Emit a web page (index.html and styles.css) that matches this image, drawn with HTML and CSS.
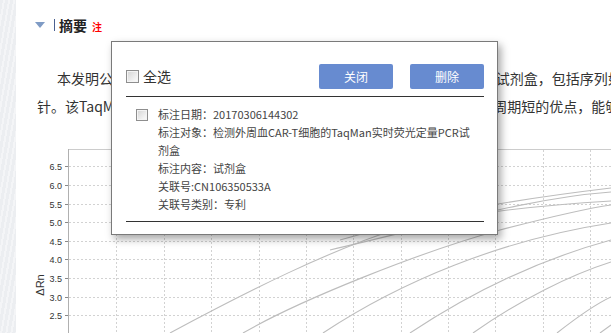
FILE: index.html
```html
<!DOCTYPE html>
<html lang="zh-CN">
<head>
<meta charset="utf-8">
<title>摘要</title>
<link rel="stylesheet" href="styles.css">
</head>
<body>
<div class="page">
  <div class="side-strip"></div>
  <main class="main">
    <div class="section-head">
      <span class="caret"></span>
      <span class="head-bar"></span>
      <h2 class="head-title">摘要</h2>
      <span class="head-note">注</span>
    </div>
    <p class="abstract">本发明公开了一种检测外周血中CAR-T细胞的TaqMan实时荧光定量PCR试剂盒，包括序列如SEQ ID NO.1所示的上游引物<br>针。该TaqMan实时荧光定量PCR试剂盒具有特异性强、灵敏度高、且检测周期短的优点，能够快速准确地检测外周血</p>
    <svg class="chart" width="595" height="193" viewBox="16 140 595 193" xmlns="http://www.w3.org/2000/svg">
      <g stroke="#d2d2d2" stroke-width="1" stroke-dasharray="2 2" fill="none">
        <line x1="69" y1="166.5" x2="611" y2="166.5"/>
        <line x1="69" y1="185.5" x2="611" y2="185.5"/>
        <line x1="69" y1="204.5" x2="611" y2="204.5"/>
        <line x1="69" y1="222.5" x2="611" y2="222.5"/>
        <line x1="69" y1="241.5" x2="611" y2="241.5"/>
        <line x1="69" y1="259.5" x2="611" y2="259.5"/>
        <line x1="69" y1="278.5" x2="611" y2="278.5"/>
        <line x1="69" y1="297.5" x2="611" y2="297.5"/>
        <line x1="69" y1="315.5" x2="611" y2="315.5"/>
        <line x1="116.5" y1="150" x2="116.5" y2="333"/>
        <line x1="164.5" y1="150" x2="164.5" y2="333"/>
        <line x1="211.5" y1="150" x2="211.5" y2="333"/>
        <line x1="259.5" y1="150" x2="259.5" y2="333"/>
        <line x1="306.5" y1="150" x2="306.5" y2="333"/>
        <line x1="353.5" y1="150" x2="353.5" y2="333"/>
        <line x1="401.5" y1="150" x2="401.5" y2="333"/>
        <line x1="448.5" y1="150" x2="448.5" y2="333"/>
        <line x1="495.5" y1="150" x2="495.5" y2="333"/>
        <line x1="543.5" y1="150" x2="543.5" y2="333"/>
        <line x1="590.5" y1="150" x2="590.5" y2="333"/>
      </g>
      <line x1="68" y1="149.5" x2="611" y2="149.5" stroke="#cccccc"/>
      <line x1="68.5" y1="149" x2="68.5" y2="333" stroke="#b0b0b0"/>
      <g stroke="#888" stroke-width="1">
        <line x1="65" y1="166.5" x2="68" y2="166.5"/>
        <line x1="65" y1="185.5" x2="68" y2="185.5"/>
        <line x1="65" y1="204.5" x2="68" y2="204.5"/>
        <line x1="65" y1="222.5" x2="68" y2="222.5"/>
        <line x1="65" y1="241.5" x2="68" y2="241.5"/>
        <line x1="65" y1="259.5" x2="68" y2="259.5"/>
        <line x1="65" y1="278.5" x2="68" y2="278.5"/>
        <line x1="65" y1="297.5" x2="68" y2="297.5"/>
        <line x1="65" y1="315.5" x2="68" y2="315.5"/>
      </g>
      <g class="tick-label" text-anchor="end">
        <text x="62" y="170">6.5</text>
        <text x="62" y="189">6.0</text>
        <text x="62" y="208">5.5</text>
        <text x="62" y="226">5.0</text>
        <text x="62" y="245">4.5</text>
        <text x="62" y="263">4.0</text>
        <text x="62" y="282">3.5</text>
        <text x="62" y="301">3.0</text>
        <text x="62" y="319">2.5</text>
      </g>
      <text class="axis-title" x="0" y="0" text-anchor="middle" transform="translate(44 285) rotate(-90)">ΔRn</text>
      <g stroke="#bdbdbd" stroke-width="1.1" fill="none">
        <path d="M 340 240 C 430 214, 510 200, 611 188"/>
        <path d="M 330 250 C 450 222, 530 198, 611 192"/>
        <path d="M 170 333 C 250 290, 330 250, 400 228 C 470 212, 545 205, 611 201"/>
        <path d="M 243 333 C 300 300, 420 252, 500 230 C 550 217, 590 208, 611 205"/>
        <path d="M 323 333 C 400 282, 500 240, 611 223"/>
        <path d="M 410 333 C 460 300, 530 262, 611 240"/>
        <path d="M 473 333 C 520 300, 570 275, 611 262"/>
        <path d="M 557 333 C 580 315, 598 303, 611 297"/>
        <path d="M 600 333 L 611 325"/>
      </g>
    </svg>
  </main>

  <div class="dialog">
    <div class="dialog-bar">
      <label class="check-all"><span class="cb"></span>全选</label>
      <div class="actions">
        <button class="btn" type="button">关闭</button>
        <button class="btn" type="button">删除</button>
      </div>
    </div>
    <div class="note">
      <span class="cb cb-sm"></span>
      <div class="note-text">
        <p>标注日期：20170306144302</p>
        <p>标注对象：检测外周血CAR-T细胞的TaqMan实时荧光定量PCR试剂盒</p>
        <p>标注内容：试剂盒</p>
        <p>关联号:CN106350533A</p>
        <p>关联号类别：专利</p>
      </div>
    </div>
  </div>
</div>
</body>
</html>
```
FILE: styles.css
```css
* { box-sizing: border-box; }
html, body { margin: 0; padding: 0; }
body {
  background: #fff;
  font-family: "Noto Sans CJK SC", "Noto Sans", sans-serif;
  color: #333;
  overflow: hidden;
  width: 611px;
  height: 333px;
}
.page {
  display: flex;
  width: 611px;
  height: 333px;
  position: relative;
  overflow: hidden;
}
.side-strip {
  flex: 0 0 16px;
  background: repeating-linear-gradient(100deg, #eceef1 0 3px, #f4f5f7 3px 5px);
}
.main {
  flex: 1 1 auto;
  min-width: 0;
}
.section-head {
  height: 50px;
  display: flex;
  align-items: center;
  padding-left: 19px;
}
.caret {
  width: 0;
  height: 0;
  border-left: 5.5px solid transparent;
  border-right: 5.5px solid transparent;
  border-top: 6px solid #7f9bc5;
  margin-right: 9px;
}
.head-bar {
  width: 1px;
  height: 12px;
  background: #4a6090;
  margin-right: 4px;
}
.head-title {
  margin: 0;
  font-size: 14px;
  font-weight: bold;
  color: #222;
  line-height: 20px;
}
.head-note {
  margin-left: 5px;
  margin-top: 3px;
  font-size: 10px;
  font-weight: bold;
  color: #f00;
}
.abstract {
  margin: 14px 0 0;
  padding-left: 21px;
  font-size: 14px;
  line-height: 28px;
  text-indent: 20px;
  white-space: nowrap;
  color: #333;
}
.chart {
  display: block;
  margin-top: 20px;
}
.tick-label text {
  font-family: "Liberation Sans", Arial, sans-serif;
  font-size: 9px;
  fill: #333;
}
.axis-title {
  font-family: "Liberation Sans", Arial, sans-serif;
  font-size: 11px;
  fill: #333;
}

/* dialog overlay */
.dialog {
  position: absolute;
  left: 111px;
  top: 41px;
  width: 387px;
  background: #fff;
  border: 1px solid #7a7a7a;
  box-shadow: 3px 4px 8px rgba(0, 0, 0, 0.35);
  padding: 22px 13px 12px 14px;
}
.dialog-bar {
  display: flex;
  justify-content: space-between;
  align-items: center;
  height: 33px;
  padding-bottom: 8px;
  border-bottom: 1px solid #333;
}
.check-all {
  display: flex;
  align-items: center;
  font-size: 14px;
  color: #333;
}
.cb {
  display: inline-block;
  width: 13px;
  height: 13px;
  border: 1px solid #8e8e8e;
  background: linear-gradient(135deg, #d4d4d4 0%, #f2f2f2 70%, #fcfcfc 100%);
  box-shadow: inset 0 0 0 1px #f4f4f4;
  margin-right: 4px;
  flex: 0 0 auto;
}
.cb-sm {
  width: 12px;
  height: 12px;
  margin-top: 4px;
  margin-right: 10px;
}
.actions {
  display: flex;
  gap: 17px;
}
.btn {
  width: 74px;
  height: 25px;
  border: 0;
  border-radius: 2px;
  background: #678bd0;
  color: #fff;
  font-family: "Noto Sans CJK SC", sans-serif;
  font-size: 12px;
  padding: 0;
}
.note {
  display: flex;
  align-items: flex-start;
  padding: 8px 0 8px 10px;
  border-bottom: 1px solid #333;
}
.note-text {
  width: 314px;
  font-size: 11px;
  line-height: 18px;
  color: #444;
}
.note-text p {
  margin: 0;
}
```
